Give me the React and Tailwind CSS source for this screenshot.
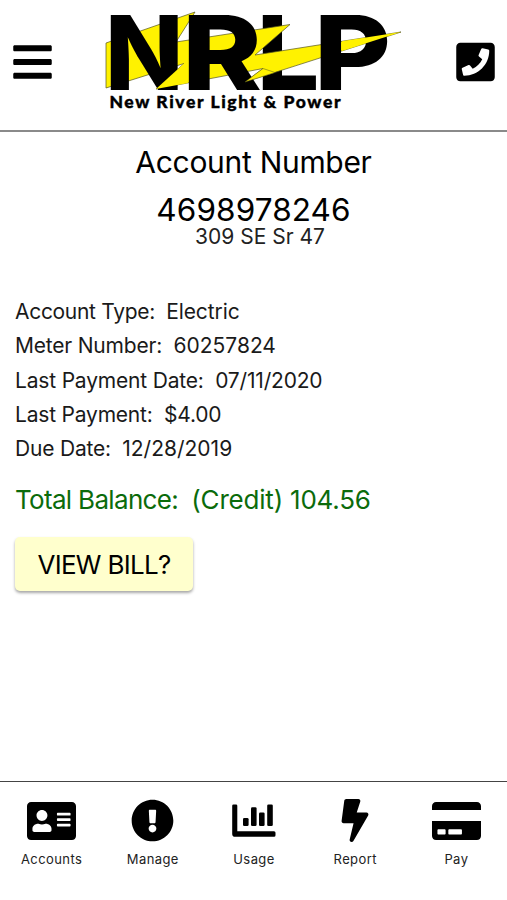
import React from 'react';
import { FaBars, FaPhoneSquare, FaAddressCard, FaExclamationCircle, FaBolt, FaCreditCard } from 'react-icons/fa';

const details = [
  { label: 'Account Type:', value: 'Electric', spacing: 'tracking-[-0.3px]', valueSpacing: 'tracking-[-0.1px]' },
  { label: 'Meter Number:', value: '60257824', spacing: 'tracking-[-0.2px]', valueSpacing: 'tracking-[0px]' },
  { label: 'Last Payment Date:', value: '07/11/2020', spacing: 'tracking-[-0.18px]', valueSpacing: 'tracking-[-0.18px]' },
  { label: 'Last Payment:', value: '$4.00', spacing: 'tracking-[-0.2px]', valueSpacing: 'tracking-[-0.2px]' },
  { label: 'Due Date:', value: '12/28/2019', spacing: 'tracking-[-0.2px]', valueSpacing: 'tracking-[0px]' },
];

const tabs = [
  { name: 'Accounts', icon: <FaAddressCard className="mt-[2px] w-[49px] h-[44px]" /> },
  { name: 'Manage', icon: <FaExclamationCircle className="w-[43px] h-[43px]" /> },
  { name: 'Usage', icon: <UsageIcon /> },
  { name: 'Report', icon: <FaBolt className="w-[28px] h-[43px]" /> },
  { name: 'Pay', icon: <FaCreditCard className="mt-[2px] w-[49px] h-[44px]" /> },
];

function UsageIcon() {
  return (
    <svg viewBox="0 0 44 34" className="mt-[2px] w-[44px] h-[34px]" fill="currentColor">
      <path d="M1.5 0.5h2.5a1.3 1.3 0 0 1 1.3 1.3v25.4h36.7a1.5 1.5 0 0 1 1.5 1.5v2.5a1.5 1.5 0 0 1-1.5 1.5H3a2.8 2.8 0 0 1-2.8-2.8V1.8A1.3 1.3 0 0 1 1.5 0.5z" />
      <rect x="11" y="14" width="5.6" height="8" rx="1.3" />
      <rect x="19" y="3.2" width="5.6" height="18.8" rx="1.3" />
      <rect x="27" y="8.5" width="5.6" height="13.5" rx="1.3" />
      <rect x="35.2" y="0.5" width="5.6" height="21.5" rx="1.3" />
    </svg>
  );
}

function Logo() {
  return (
    <svg viewBox="0 0 300 110" className="w-[300px] h-[110px] overflow-visible" fontFamily="Inter, sans-serif">
      <g fontSize="103" fontWeight="800">
        <text x="151.5" y="84.5" textLength="63" lengthAdjust="spacingAndGlyphs">L</text>
        <path
          d="M1 38L90 7L71 37L185 19.5L150 50L296 27L140 77L158 63.5L51 84L79 58.5L1 83Z"
          fill="#fff200"
          stroke="#55551f"
          strokeWidth="0.7"
        />
        <text x="0" y="84.5" textLength="78.5" lengthAdjust="spacingAndGlyphs">N</text>
        <text x="77" y="84.5" textLength="80" lengthAdjust="spacingAndGlyphs">R</text>
        <text x="209" y="84.5" textLength="77" lengthAdjust="spacingAndGlyphs">P</text>
        {/* parts of the bolt that pass in front of the letters */}
        <path d="M79 58.5L51 84L83 78V57Z" fill="#fff200" />
        <path d="M158 63.5L140 77L170 67.5Z" fill="#fff200" stroke="#55551f" strokeWidth="0.5" />
        <path d="M237 36.3L296 27L237 46Z" fill="#fff200" />
      </g>
      <text x="4.5" y="103" fontFamily="Lato, sans-serif" fontSize="17.5" fontWeight="900" stroke="#000" strokeWidth="0.4" textLength="231">
        New River Light &amp; Power
      </text>
    </svg>
  );
}

function App() {
  return (
    <div className="flex h-[900px] w-full flex-col bg-white font-['Inter',sans-serif] text-black">
      <header className="flex h-[132px] shrink-0 items-start border-b-2 border-[#8a8a8a]">
        <FaBars className="mt-[40px] ml-[13px] h-[44px] w-[39px]" />
        <div className="mt-[5px] ml-[53px]">
          <Logo />
        </div>
        <FaPhoneSquare className="mt-[40px] mr-[12px] ml-auto h-[44px] w-[39px]" />
      </header>

      <main className="flex-1">
        <div className="flex flex-col items-center pt-[11px]">
          <h1 className="text-[30px] leading-[38px] tracking-[-0.3px]">Account Number</h1>
          <div className="mt-[10px] text-[31.5px] leading-[38px] tracking-[0.1px]">4698978246</div>
          <div className="-mt-[5px] ml-[13px] text-[21px] leading-[26px] text-[#222]">309 SE Sr 47</div>
        </div>

        <div className="mt-[45px] pl-[15px]">
          {details.map((row) => (
            <div key={row.label} className="h-[34.3px] text-[21px] leading-[34px] whitespace-pre text-[#1a1a1a]">
              <span className={row.spacing}>{row.label}{'  '}</span>
              <span className={row.valueSpacing}>{row.value}</span>
            </div>
          ))}
          <div className="mt-[15px] text-[26px] leading-[38px] whitespace-pre text-[#0b6b0b]">
            <span className="tracking-[-0.68px]">{'Total Balance:  '}</span>
            <span className="tracking-[-0.2px]">(Credit) 104.56</span>
          </div>
          <button className="mt-[18px] h-[54px] w-[178px] rounded-[5px] bg-[#ffffcd] text-[26px] tracking-[-0.7px] shadow-[0_2px_3px_rgba(0,0,0,0.35)]">
            VIEW BILL?
          </button>
        </div>
      </main>

      <nav className="grid h-[119px] shrink-0 grid-cols-5 border-t border-[#444] pl-[1px]">
        {tabs.map((tab) => (
          <div key={tab.name} className="flex flex-col items-center pt-[16px]">
            <div className="flex h-[44px] items-center">{tab.icon}</div>
            <span className="mt-[8px] text-[13px] leading-[18px] tracking-[0.4px] text-[#222]">{tab.name}</span>
          </div>
        ))}
      </nav>
    </div>
  );
}

export default App;
